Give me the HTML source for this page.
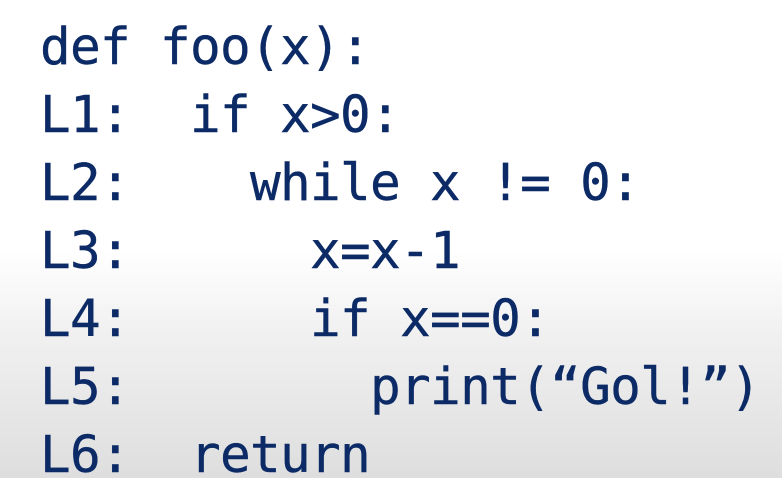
<!DOCTYPE html>
<html><head><meta charset="utf-8"><style>
html,body{margin:0;padding:0;}
body{width:782px;height:478px;overflow:hidden;background:linear-gradient(to bottom,#ffffff 0px,#ffffff 250px,#f1f1f1 330px,#dedede 478px);position:relative;}
pre{position:absolute;left:40px;top:14px;margin:0;font-family:"DejaVu Sans Mono","Liberation Mono",monospace;font-size:51px;line-height:68px;color:#0c2b66;letter-spacing:-0.7px;-webkit-text-stroke:0.4px #0c2b66;}
</style></head><body>
<pre>def foo(x):
L1:  if x>0:
L2:    while x != 0:
L3:      x=x-1
L4:      if x==0:
L5:        print(“Gol!”)
L6:  return</pre>
</body></html>
